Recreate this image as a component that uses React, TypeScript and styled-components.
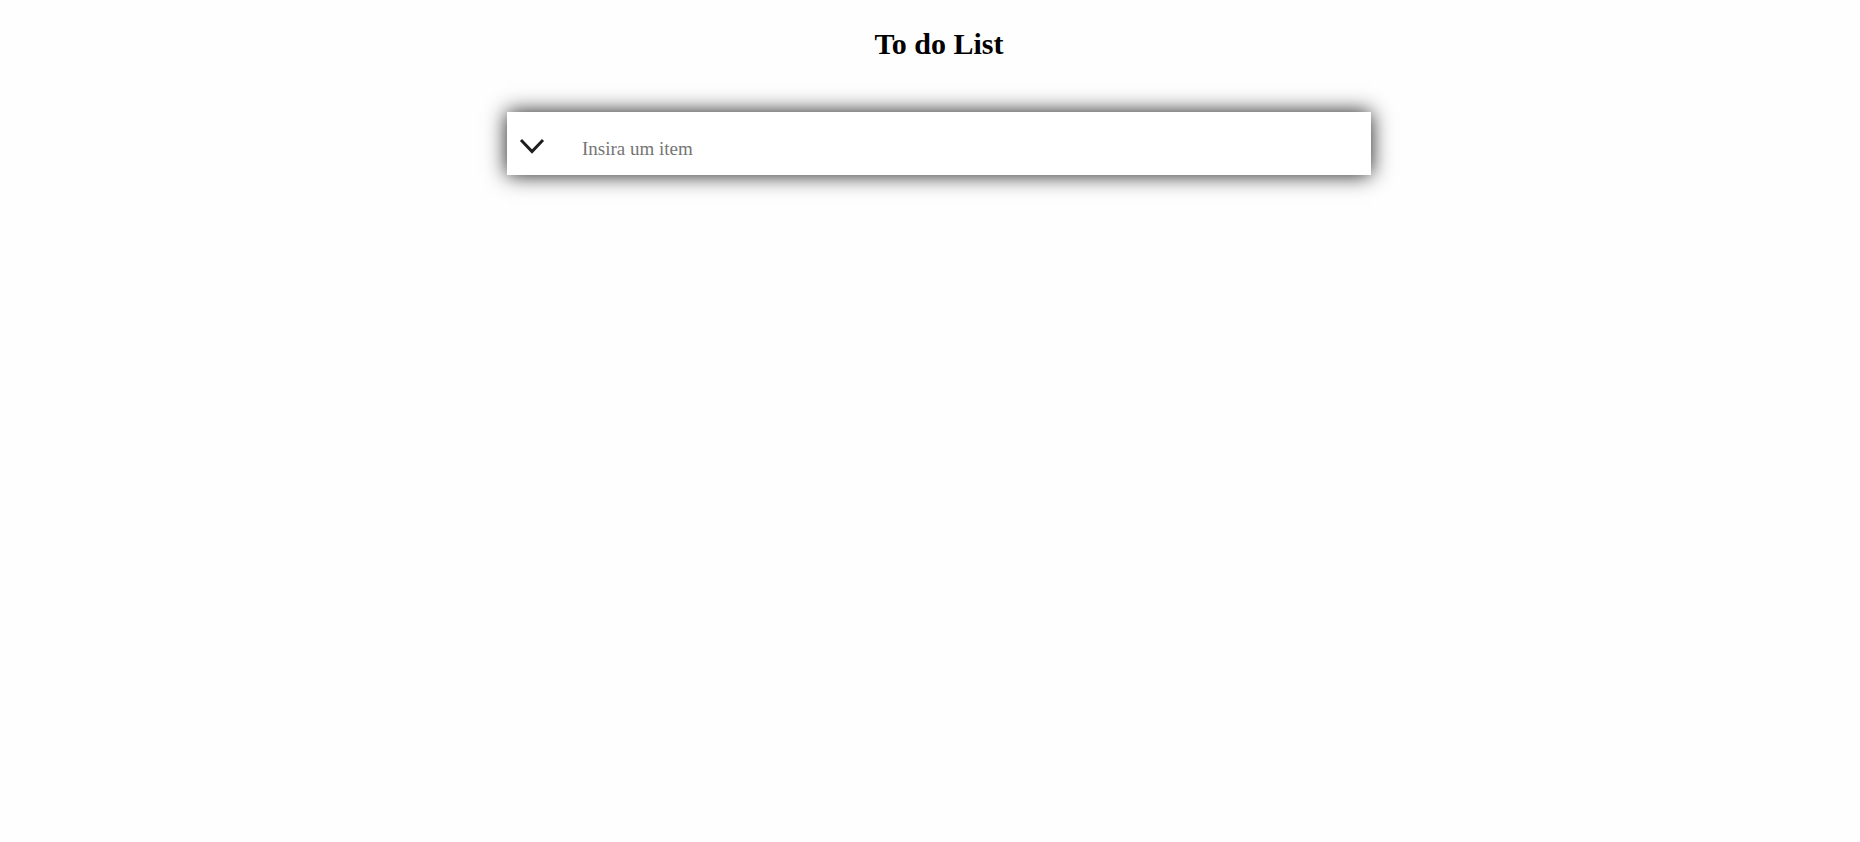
import React from "react";
import styled, { createGlobalStyle } from "styled-components";

const GlobalStyle = createGlobalStyle`
  html, body {
    margin: 0;
    padding: 0;
    background: #fefefe;
    font-family: "Liberation Serif", "Times New Roman", serif;
  }
`;

const Page = styled.main`
  min-height: 842px;
  box-sizing: border-box;
  padding: 27px 0 0 18px;
  display: flex;
  flex-direction: column;
  align-items: center;
`;

const Title = styled.h1`
  margin: 0;
  font-family: "Liberation Serif", "Times New Roman", serif;
  font-size: 30px;
  font-weight: 700;
  color: #000;
  line-height: 33px;
`;

const Card = styled.div`
  margin-top: 52px;
  width: 864px;
  height: 63px;
  box-sizing: border-box;
  background: #ffffff;
  box-shadow: 0 0 20px rgba(0, 0, 0, 0.9);
  display: flex;
  align-items: center;
  padding-left: 12px;
`;

const ToggleButton = styled.button`
  border: none;
  background: transparent;
  padding: 0;
  margin: 6px 0 0 0;
  width: 26px;
  height: 17px;
  display: flex;
  cursor: pointer;
`;

const ItemInput = styled.input`
  flex: 1;
  margin: 10px 0 0 37px;
  border: none;
  outline: none;
  background: transparent;
  padding: 0;
  font-family: "Liberation Serif", "Times New Roman", serif;
  font-size: 19px;
  color: #222;
  &::placeholder {
    color: #757575;
  }
`;

export default function App() {
  return (
    <>
      <GlobalStyle />
      <Page>
        <Title>To do List</Title>
        <Card>
          <ToggleButton aria-label="toggle">
            <svg width="26" height="17" viewBox="0 0 26 17">
              <polyline
                points="2,2 13,13.5 24,2"
                fill="none"
                stroke="#1f1f1f"
                strokeWidth="3"
                strokeLinecap="butt"
                strokeLinejoin="miter"
              />
            </svg>
          </ToggleButton>
          <ItemInput placeholder="Insira um item" />
        </Card>
      </Page>
    </>
  );
}
